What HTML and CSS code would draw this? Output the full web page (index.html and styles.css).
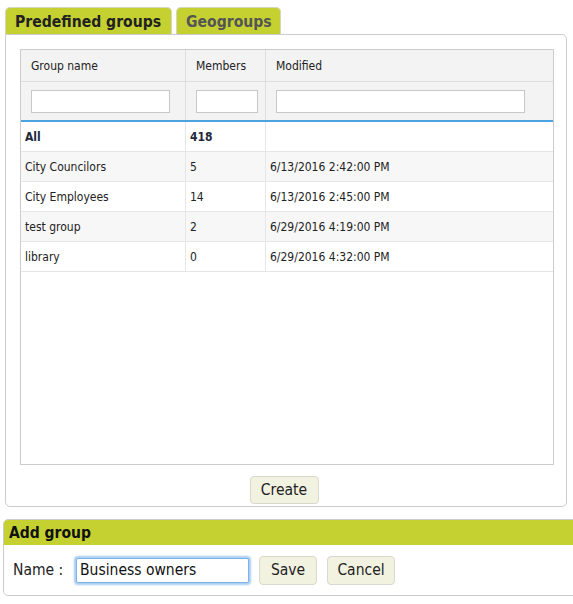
FILE: index.html
```html
<!DOCTYPE html>
<html>
<head>
<meta charset="utf-8">
<link rel="stylesheet" href="styles.css">
</head>
<body>
<div class="page">
  <div class="tabs">
    <div class="tab active">Predefined groups</div>
    <div class="tab">Geogroups</div>
  </div>
  <div class="panel">
    <div class="grid">
      <div class="row head">
        <div class="cell c1">Group name</div>
        <div class="cell c2">Members</div>
        <div class="cell c3">Modified</div>
      </div>
      <div class="row filter">
        <div class="cell c1"><input class="f f1" type="text"></div>
        <div class="cell c2"><input class="f f2" type="text"></div>
        <div class="cell c3"><input class="f f3" type="text"></div>
      </div>
      <div class="row data bold">
        <div class="cell c1">All</div>
        <div class="cell c2">418</div>
        <div class="cell c3"></div>
      </div>
      <div class="row data alt">
        <div class="cell c1">City Councilors</div>
        <div class="cell c2">5</div>
        <div class="cell c3">6/13/2016 2:42:00 PM</div>
      </div>
      <div class="row data">
        <div class="cell c1">City Employees</div>
        <div class="cell c2">14</div>
        <div class="cell c3">6/13/2016 2:45:00 PM</div>
      </div>
      <div class="row data alt">
        <div class="cell c1">test group</div>
        <div class="cell c2">2</div>
        <div class="cell c3">6/29/2016 4:19:00 PM</div>
      </div>
      <div class="row data">
        <div class="cell c1">library</div>
        <div class="cell c2">0</div>
        <div class="cell c3">6/29/2016 4:32:00 PM</div>
      </div>
    </div>
    <div class="actions"><button class="btn create">Create</button></div>
  </div>
  <div class="addgroup">
    <div class="ag-head">Add group</div>
    <div class="ag-body">
      <span class="lbl">Name :</span>
      <input class="name" type="text" value="Business owners">
      <button class="btn save">Save</button>
      <button class="btn cancel">Cancel</button>
    </div>
  </div>
</div>
</body>
</html>
```

FILE: styles.css
```css
body {
  margin: 0;
  background: #fff;
  font-family: "DejaVu Sans Condensed", "DejaVu Sans", Verdana, sans-serif;
  font-size: 12px;
  color: #222;
}
.page {
  width: 573px;
  height: 604px;
  overflow: hidden;
}
.tabs {
  display: flex;
  gap: 4px;
  padding: 7px 0 0 5px;
  height: 27px;
}
.tab {
  box-sizing: border-box;
  height: 27px;
  background: #c5d131;
  border: 1px solid #d6d6c0;
  border-bottom: none;
  border-radius: 5px 5px 0 0;
  font-size: 15.6px;
  font-weight: bold;
  color: #555;
  display: flex;
  align-items: center;
  padding-top: 1px;
}
.tab.active {
  width: 167px;
  color: #222;
  padding-left: 9px;
}
.tab:not(.active) {
  width: 105px;
  padding-left: 9px;
}
.panel {
  box-sizing: border-box;
  margin-left: 5px;
  width: 562px;
  height: 473px;
  border: 1px solid #ccc;
  border-radius: 0 5px 5px 5px;
  padding: 14px 12px 0 14px;
}
.grid {
  box-sizing: border-box;
  width: 534px;
  height: 416px;
  border: 1px solid #ccc;
}
.row {
  display: flex;
  border-bottom: 1px solid #e6e6e6;
}
.cell {
  box-sizing: border-box;
  display: flex;
  align-items: center;
  border-right: 1px solid #e6e6e6;
}
.c1 { width: 165px; }
.c2 { width: 80px; }
.c3 { flex: 1; border-right: none; }
.head {
  height: 31px;
  background: #f3f3f3;
  border-bottom-color: #ddd;
}
.head .cell { padding-left: 10px; border-right-color: #ddd; }
.filter {
  height: 40px;
  box-sizing: border-box;
  background: #f3f3f3;
  border-bottom: 2px solid #4ba3e0;
}
.filter .cell { padding-left: 10px; border-right-color: #ddd; }
.f {
  box-sizing: border-box;
  height: 23px;
  border: 1px solid #c8c8c8;
  background: #fff;
  margin: 0;
  padding: 0;
}
.f1 { width: 139px; }
.f2 { width: 62px; }
.f3 { width: 249px; }
.data {
  height: 30px;
  box-sizing: border-box;
  background: #fff;
}
.data .cell { padding-left: 4px; }
.data.alt { background: #f7f7f7; }
.data.bold { font-weight: bold; color: #1e2a3a; }
.actions {
  display: flex;
  justify-content: center;
  padding: 11px 0 0 0;
  margin-left: -6px;
}
.btn {
  box-sizing: border-box;
  font-family: inherit;
  font-size: 15.5px;
  color: #222;
  background: #f2f2e1;
  border: 1px solid #d8d8cc;
  border-radius: 4px;
  padding: 0;
  height: 28px;
}
.create { width: 69px; }
.addgroup {
  box-sizing: border-box;
  margin: 12px 0 0 3px;
  width: 580px;
  height: 77px;
  border: 1px solid #ccc;
  border-radius: 5px 0 0 5px;
  overflow: hidden;
}
.ag-head {
  height: 25px;
  background: #c5d131;
  font-size: 15.5px;
  font-weight: bold;
  color: #111;
  display: flex;
  align-items: center;
  padding-left: 5px;
}
.ag-body {
  display: flex;
  align-items: center;
  height: 50px;
  padding-left: 9px;
}
.lbl {
  font-size: 15.5px;
  color: #222;
  width: 62px;
}
.name {
  box-sizing: border-box;
  width: 173px;
  height: 25px;
  margin: 0 10px 0 1px;
  border: 1px solid #7fb3e8;
  box-shadow: 0 0 2px 2px #a9cdf2;
  border-radius: 2px;
  font-family: inherit;
  font-size: 15.5px;
  padding: 0 3px;
  color: #111;
}
.save { width: 58px; height: 29px; margin-right: 10px; }
.cancel { width: 68px; height: 29px; }
```
